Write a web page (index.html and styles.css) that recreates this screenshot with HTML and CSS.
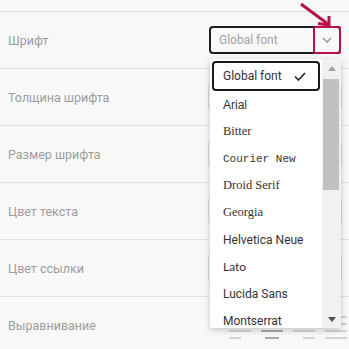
FILE: index.html
```html
<!DOCTYPE html>
<html lang="ru">
<head>
    <meta charset="UTF-8">
    <meta name="viewport" content="width=device-width, initial-scale=1.0">
    <title>Настройки шрифта</title>
    <link rel="stylesheet" href="styles.css">
</head>
<body>
    <div class="settings">
        <div class="row row-cut"></div>

        <div class="row">
            <span class="label">Шрифт</span>
            <div class="picker">
                <div class="select">
                    <span class="select-value">Global font</span>
                    <span class="select-toggle">
                        <svg width="10" height="6" viewBox="0 0 10 6"><polyline points="1,1 5,5 9,1" fill="none" stroke="#9a9a9a" stroke-width="1.6"/></svg>
                    </span>
                </div>

                <!-- annotation arrow -->
                <svg class="pointer" width="36" height="28" viewBox="0 0 36 28">
                    <line x1="3" y1="2" x2="30" y2="22" stroke="#b8124c" stroke-width="3"/>
                    <polyline points="20,21.5 31,23 31,14" fill="none" stroke="#b8124c" stroke-width="3"/>
                </svg>

                <div class="dropdown">
                    <ul class="options">
                        <li class="option option-active">
                            Global font
                            <svg width="12" height="9" viewBox="0 0 12 9"><polyline points="1,4.5 4.5,8 11,1" fill="none" stroke="#222" stroke-width="1.6"/></svg>
                        </li>
                        <li class="option font-arial">Arial</li>
                        <li class="option font-serif">Bitter</li>
                        <li class="option font-mono">Courier New</li>
                        <li class="option font-serif">Droid Serif</li>
                        <li class="option font-serif">Georgia</li>
                        <li class="option">Helvetica Neue</li>
                        <li class="option font-lato">Lato</li>
                        <li class="option">Lucida Sans</li>
                        <li class="option">Montserrat</li>
                    </ul>
                    <div class="scrollbar">
                        <span class="scroll-btn"><span class="tri-up"></span></span>
                        <span class="scroll-thumb"></span>
                        <span class="scroll-track"></span>
                        <span class="scroll-btn"><span class="tri-down"></span></span>
                    </div>
                </div>
            </div>
        </div>

        <div class="row">
            <span class="label">Толщина шрифта</span>
            <div class="field"></div>
        </div>
        <div class="row">
            <span class="label">Размер шрифта</span>
            <div class="field"></div>
        </div>
        <div class="row">
            <span class="label">Цвет текста</span>
            <div class="field"></div>
        </div>
        <div class="row">
            <span class="label">Цвет ссылки</span>
            <div class="field"></div>
        </div>
        <div class="row">
            <span class="label">Выравнивание</span>
            <div class="align-group">
                <span class="align-icon align-left"><i></i><i></i><i></i><i></i></span>
                <span class="align-icon align-center active"><i></i><i></i><i></i><i></i></span>
                <span class="align-icon align-right"><i></i><i></i><i></i><i></i></span>
                <span class="align-icon align-justify"><i></i><i></i><i></i><i></i></span>
            </div>
        </div>
    </div>
</body>
</html>
```

FILE: styles.css
```css
html, body {
    overflow: hidden;
}
body {
    margin: 0;
    background-color: #f8f8f8;
    font-family: Roboto, "Noto Sans", sans-serif;
}
.row {
    display: flex;
    align-items: center;
    justify-content: space-between;
    height: 56px;
    padding: 0 8px;
    border-bottom: 1px solid #e2e2e2;
}
.row-cut {
    height: 11px;
}
.label {
    font-size: 12.5px;
    color: #9d9d9d;
}

/* font select */
.picker {
    position: relative;
    width: 132px;
}
.select {
    display: flex;
    align-items: center;
    height: 28px;
    box-sizing: border-box;
    border: 2px solid #1e1e1e;
    border-radius: 4px;
}
.select-value {
    flex: 1;
    padding-left: 8px;
    font-size: 12px;
    color: #a3a3a3;
}
.select-toggle {
    display: flex;
    align-items: center;
    justify-content: center;
    width: 28px;
    height: 28px;
    box-sizing: border-box;
    margin: -2px -2px -2px 0;
    border: 2px solid #b8124c;
    border-radius: 2px;
}
.pointer {
    position: absolute;
    left: 89px;
    top: -24px;
}
.dropdown {
    position: absolute;
    top: calc(100% + 5px);
    left: 1px;
    width: 131px;
    height: 269px;
    display: flex;
    background-color: #fff;
    border-radius: 2px;
    box-shadow: 0 2px 6px rgba(0,0,0,0.22);
    z-index: 2;
}
.options {
    flex: 1;
    list-style: none;
    margin: 0;
    padding: 2px 0 0 2px;
    overflow: hidden;
}
.option {
    display: flex;
    align-items: center;
    height: 27px;
    padding-left: 11px;
    font-size: 12px;
    color: #333;
}
.option-active {
    justify-content: space-between;
    height: 30px;
    box-sizing: border-box;
    margin-right: 2px;
    padding: 0 12px 0 9px;
    border: 2px solid #1a1a1a;
    border-radius: 4px;
}
.font-arial {
    font-family: "Liberation Sans", Arial, sans-serif;
}
.font-serif {
    font-family: "Liberation Serif", serif;
    font-size: 12.5px;
}
.font-mono {
    font-family: "Liberation Mono", monospace;
    font-size: 11px;
}
.font-lato {
    font-family: Lato, sans-serif;
}
.scrollbar {
    display: flex;
    flex-direction: column;
    width: 19px;
    background-color: #f1f1f1;
}
.scroll-btn {
    display: flex;
    align-items: center;
    justify-content: center;
    height: 18px;
}
.tri-up {
    border-left: 4.5px solid transparent;
    border-right: 4.5px solid transparent;
    border-bottom: 5px solid #a3a3a3;
}
.tri-down {
    border-left: 4.5px solid transparent;
    border-right: 4.5px solid transparent;
    border-top: 5px solid #505050;
}
.scroll-thumb {
    height: 111px;
    margin: 2px 2px 0 1px;
    background-color: #c1c1c1;
}
.scroll-track {
    flex: 1;
}

/* other controls, mostly under the dropdown */
.field {
    width: 134px;
    height: 28px;
    box-sizing: border-box;
    margin-right: -1px;
    border: 1px solid #dadada;
    border-radius: 4px;
}
.align-group {
    display: flex;
    gap: 10px;
    margin-right: -6px;
}
.align-icon {
    display: flex;
    flex-direction: column;
    gap: 5px;
    width: 22px;
    margin-top: 4px;
}
.align-icon i {
    height: 2px;
    width: 100%;
    background-color: #d3d3d3;
}
.align-icon.active i {
    background-color: #a8a8a8;
}
.align-left i:nth-child(even) {
    width: 12px;
}
.align-center {
    align-items: center;
}
.align-center i:nth-child(even) {
    width: 14px;
}
.align-right {
    align-items: flex-end;
}
.align-right i:nth-child(even) {
    width: 12px;
}
```
